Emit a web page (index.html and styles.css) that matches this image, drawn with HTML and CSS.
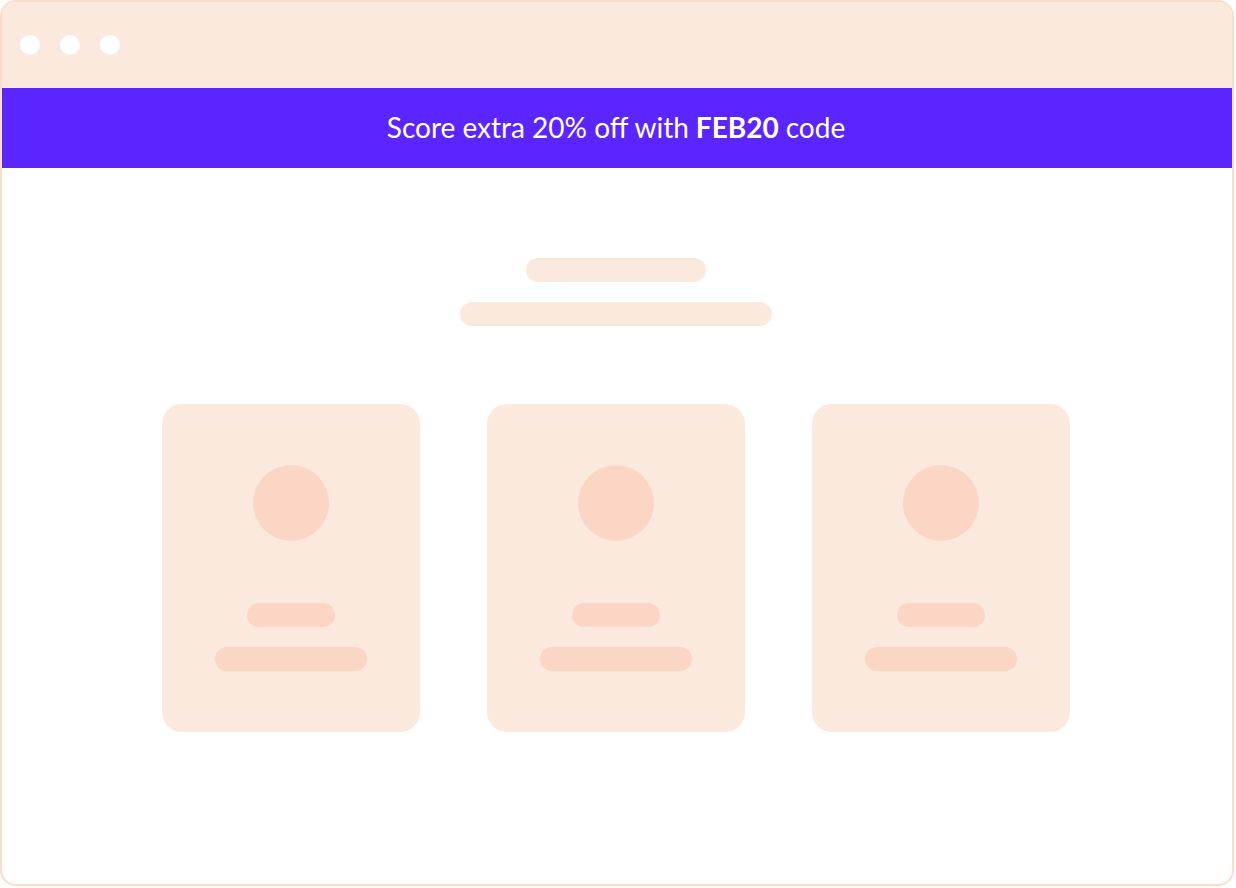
FILE: index.html
```html
<!DOCTYPE html>
<html>
<head>
<meta charset="utf-8">
<link rel="stylesheet" href="styles.css">
</head>
<body>
<div class="frame">
  <div class="titlebar">
    <span class="dot"></span><span class="dot"></span><span class="dot"></span>
  </div>
  <div class="banner">Score extra 20% off with <b>FEB20</b> code</div>
  <div class="content">
    <div class="heading">
      <div class="pill pill-title"></div>
      <div class="pill pill-sub"></div>
    </div>
    <div class="cards">
      <div class="card">
        <div class="avatar"></div>
        <div class="line line-short"></div>
        <div class="line line-long"></div>
      </div>
      <div class="card">
        <div class="avatar"></div>
        <div class="line line-short"></div>
        <div class="line line-long"></div>
      </div>
      <div class="card">
        <div class="avatar"></div>
        <div class="line line-short"></div>
        <div class="line line-long"></div>
      </div>
    </div>
  </div>
</div>
</body>
</html>
```
FILE: styles.css
```css
html, body {
  margin: 0;
  padding: 0;
  background: #ffffff;
}
.frame {
  box-sizing: border-box;
  width: 1234px;
  height: 886px;
  border: 2px solid #fcdccb;
  border-radius: 16px;
  overflow: hidden;
  background: #ffffff;
  font-family: "Lato", "Noto Sans", sans-serif;
}
.titlebar {
  height: 86px;
  background: #fbe9de;
  display: flex;
  align-items: center;
  gap: 20px;
  padding-left: 18px;
}
.dot {
  width: 20px;
  height: 20px;
  border-radius: 50%;
  background: #ffffff;
}
.banner {
  height: 80px;
  background: #5b25ff;
  color: #ffffff;
  display: flex;
  align-items: center;
  justify-content: center;
  font-size: 28px;
  padding-right: 2px;
  padding-bottom: 3px;
  box-sizing: border-box;
}
.banner b {
  font-weight: 700;
  margin: 0 7px;
}
.content {
  display: flex;
  flex-direction: column;
  align-items: center;
  padding-top: 90px;
  padding-right: 2px;
}
.heading {
  display: flex;
  flex-direction: column;
  align-items: center;
  gap: 20px;
}
.pill {
  height: 24px;
  border-radius: 12px;
  background: #fbe9de;
}
.pill-title { width: 180px; }
.pill-sub { width: 312px; }
.cards {
  display: flex;
  gap: 67px;
  margin-top: 78px;
}
.card {
  width: 258px;
  height: 328px;
  border-radius: 20px;
  background: #fbe9de;
  display: flex;
  flex-direction: column;
  align-items: center;
  box-sizing: border-box;
  padding-top: 61px;
}
.avatar {
  width: 76px;
  height: 76px;
  border-radius: 50%;
  background: #fbd6c4;
}
.line {
  height: 24px;
  border-radius: 12px;
  background: #fbd6c4;
}
.line-short { width: 88px; margin-top: 62px; }
.line-long { width: 152px; margin-top: 20px; }
```
